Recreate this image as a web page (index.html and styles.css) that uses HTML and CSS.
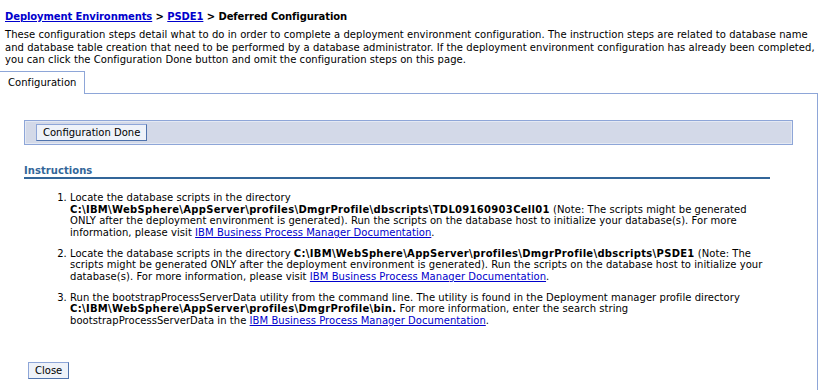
FILE: index.html
```html
<!DOCTYPE html>
<html lang="en">
<head>
    <meta charset="UTF-8">
    <title>Deferred Configuration</title>
    <link rel="stylesheet" href="styles.css">
</head>
<body>
    <div class="page">
        <div class="breadcrumb">
            <a href="#">Deployment Environments</a> &gt; <a href="#">PSDE1</a> &gt; Deferred Configuration
        </div>

        <p class="description">These configuration steps detail what to do in order to complete a deployment environment configuration. The instruction steps are related to database name and database table creation that need to be performed by a database administrator. If the deployment environment configuration has already been completed, you can click the Configuration Done button and omit the configuration steps on this page.</p>

        <div class="tabs">
            <div class="tab active">Configuration</div>
            <div class="tab-filler"></div>
        </div>

        <div class="tab-panel">
            <div class="button-bar">
                <button class="btn">Configuration Done</button>
            </div>

            <div class="section">
                <h3 class="section-title">Instructions</h3>
                <ol class="steps">
                    <li>Locate the database scripts in the directory <b>C:\IBM\WebSphere\AppServer\profiles\DmgrProfile\dbscripts\TDL09160903Cell01</b> (Note: The scripts might be generated ONLY after the deployment environment is generated). Run the scripts on the database host to initialize your database(s). For more information, please visit <a href="#">IBM Business Process Manager Documentation</a>.</li>
                    <li>Locate the database scripts in the directory <b>C:\IBM\WebSphere\AppServer\profiles\DmgrProfile\dbscripts\PSDE1</b> (Note: The scripts might be generated ONLY after the deployment environment is generated). Run the scripts on the database host to initialize your database(s). For more information, please visit <a href="#">IBM Business Process Manager Documentation</a>.</li>
                    <li>Run the bootstrapProcessServerData utility from the command line. The utility is found in the Deployment manager profile directory <b>C:\IBM\WebSphere\AppServer\profiles\DmgrProfile\bin.</b> For more information, enter the search string bootstrapProcessServerData in the <a href="#">IBM Business Process Manager Documentation</a>.</li>
                </ol>
            </div>

            <div class="footer">
                <button class="btn">Close</button>
            </div>
        </div>
    </div>
</body>
</html>
```

FILE: styles.css
```css
html, body {
    height: 100%;
}

body {
    margin: 0;
    padding: 0;
    font-family: "DejaVu Sans", Verdana, sans-serif;
    font-size: 10px;
    letter-spacing: 0.05px;
    color: #000;
    background-color: #fff;
    overflow: hidden;
}

a {
    color: #0000cc;
}

.page {
    display: flex;
    flex-direction: column;
    height: 100%;
}

.breadcrumb {
    padding: 10px 5px 0 5px;
    font-weight: bold;
    letter-spacing: -0.1px;
    line-height: 13px;
}

.description {
    margin: 6px 0 0 0;
    padding: 0 5px;
    line-height: 12.67px;
}

.tabs {
    display: flex;
    margin-top: 4px;
}

.tab {
    padding: 0 8px;
    height: 22px;
    line-height: 22px;
    border-top: 1px solid #8ea6d8;
    border-right: 1px solid #8ea6d8;
}

.tab-filler {
    flex: 1;
    border-bottom: 1px solid #8ea6d8;
    margin-right: 10px;
}

.tab-panel {
    flex: 1;
    border-right: 1px solid #8ea6d8;
    margin-right: 10px;
    padding: 26px 24px 0 24px;
}

.button-bar {
    background-color: #d3d9e8;
    border: 1px solid #8ea6d8;
    box-shadow: inset 0 0 0 1px #e4e9f3;
    padding: 3px 11px;
}

.btn {
    font-family: "DejaVu Sans", Verdana, sans-serif;
    font-size: 10px;
    color: #000;
    background-color: #eef2f9;
    border: 1px solid;
    border-color: #8ea6d8 #4f73ad #4f73ad #8ea6d8;
    padding: 1px 6px;
    height: 17px;
    line-height: 13px;
}

.section {
    margin: 20px 23px 0 0;
}

.section-title {
    margin: 0;
    font-size: 10px;
    color: #336699;
    line-height: 11px;
    padding-bottom: 1px;
    border-bottom: 2px solid #336699;
}

.steps {
    margin: 13px 4px 0 0;
    padding-left: 46px;
    line-height: 11.67px;
}

.steps li {
    margin-bottom: 9px;
}

.steps b {
    letter-spacing: 0.3px;
}

.footer {
    margin-top: 35px;
    padding-left: 4px;
}
```
